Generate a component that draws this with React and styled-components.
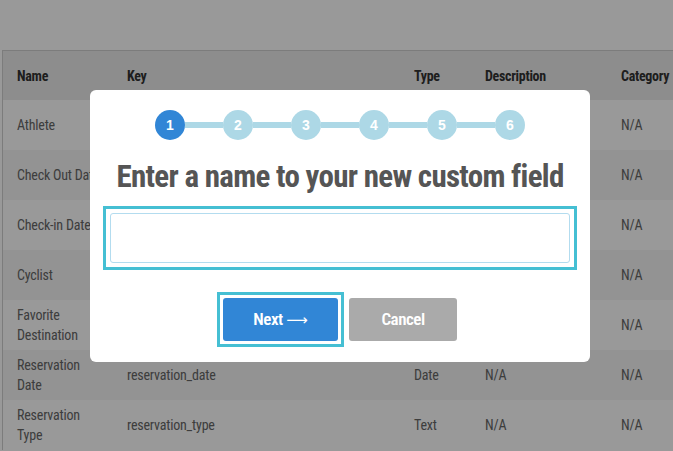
import React from 'react';
import styled, { createGlobalStyle } from 'styled-components';

const FONT = `"Roboto Condensed", Roboto, "Liberation Sans", sans-serif`;

const GlobalStyle = createGlobalStyle`
  html, body {
    margin: 0;
    padding: 0;
    background: #ffffff;
    overflow: hidden;
  }
  body {
    font-family: ${FONT};
  }
`;

const rows = [
  { name: 'Athlete', key: '', type: '', description: '', category: 'N/A' },
  { name: 'Check Out Date', key: '', type: '', description: '', category: 'N/A' },
  { name: 'Check-in Date', key: '', type: '', description: '', category: 'N/A' },
  { name: 'Cyclist', key: '', type: '', description: '', category: 'N/A' },
  { name: 'Favorite Destination', key: '', type: '', description: '', category: 'N/A' },
  { name: 'Reservation Date', key: 'reservation_date', type: 'Date', description: 'N/A', category: 'N/A' },
  { name: 'Reservation Type', key: 'reservation_type', type: 'Text', description: 'N/A', category: 'N/A' },
];

const steps = [1, 2, 3, 4, 5, 6];

export default function App() {
  return (
    <>
      <GlobalStyle />
      <Page>
        <Table>
          <HeaderRow>
            <HeadCell>Name</HeadCell>
            <HeadCell>Key</HeadCell>
            <HeadCell>Type</HeadCell>
            <HeadCell>Description</HeadCell>
            <HeadCell>Category</HeadCell>
          </HeaderRow>
          {rows.map((row, i) => (
            <Row key={row.name} striped={i % 2 === 1}>
              <Cell narrow>{row.name}</Cell>
              <Cell>{row.key}</Cell>
              <Cell>{row.type}</Cell>
              <Cell>{row.description}</Cell>
              <Cell>{row.category}</Cell>
            </Row>
          ))}
        </Table>
      </Page>

      <Overlay>
        <Modal>
          <Stepper>
            {steps.map((n, i) => (
              <React.Fragment key={n}>
                {i > 0 && <Connector />}
                <StepDot active={n === 1}>{n}</StepDot>
              </React.Fragment>
            ))}
          </Stepper>
          <Title>Enter a name to your new custom field</Title>
          <FocusRing offset={4} stretch>
            <NameInput type="text" />
          </FocusRing>
          <Actions>
            <FocusRing offset={3}>
              <NextButton>
                Next <Arrow>&#x27F6;</Arrow>
              </NextButton>
            </FocusRing>
            <CancelButton>Cancel</CancelButton>
          </Actions>
        </Modal>
      </Overlay>
    </>
  );
}

const Page = styled.div`
  padding: 50px 0 0 2px;
  width: 800px;
`;

const Table = styled.div`
  border-top: 1px solid #cfcfcf;
  border-left: 1px solid #cfcfcf;
`;

const columns = `110px 287px 71px 136px 1fr`;

const HeaderRow = styled.div`
  display: grid;
  grid-template-columns: ${columns};
  height: 49px;
  align-items: center;
  background: #ececec;
`;

const HeadCell = styled.div`
  padding-left: 14px;
  font-size: 14px;
  font-weight: 700;
  letter-spacing: -0.3px;
  color: #333333;
`;

const Row = styled.div`
  display: grid;
  grid-template-columns: ${columns};
  height: 50px;
  align-items: center;
  background: ${p => (p.striped ? '#f5f5f5' : '#ffffff')};
`;

const Cell = styled.div`
  padding-left: 14px;
  padding-right: ${p => (p.narrow ? '12px' : '0')};
  font-size: 14px;
  line-height: 20px;
  letter-spacing: -0.2px;
  color: #666666;
`;

const Overlay = styled.div`
  position: fixed;
  inset: 0;
  background: rgba(0, 0, 0, 0.4);
  display: flex;
  align-items: center;
  justify-content: center;
  padding-left: 7px;
`;

const Modal = styled.div`
  width: 500px;
  box-sizing: border-box;
  background: #ffffff;
  border-radius: 6px;
  padding: 20px 20px 21px;
  display: flex;
  flex-direction: column;
  align-items: center;
`;

const Stepper = styled.div`
  display: flex;
  align-items: center;
`;

const Connector = styled.div`
  width: 38px;
  height: 6px;
  background: #add8e6;
`;

const StepDot = styled.div`
  width: 30px;
  height: 30px;
  border-radius: 50%;
  background: ${p => (p.active ? '#3186d6' : '#add8e6')};
  color: #ffffff;
  font-family: "Liberation Sans", Arial, sans-serif;
  font-size: 14px;
  font-weight: 700;
  display: flex;
  align-items: center;
  justify-content: center;
`;

const Title = styled.h2`
  margin: 19px 0 18px;
  font-size: 31px;
  line-height: 36px;
  font-weight: 700;
  letter-spacing: -0.7px;
  white-space: nowrap;
  color: #555555;
  text-align: center;
`;

const FocusRing = styled.div`
  display: flex;
  align-self: ${p => (p.stretch ? 'stretch' : 'auto')};
  margin: ${p => `-${p.offset + 3}px`};
  padding: ${p => `${p.offset}px`};
  border: 3px solid #45bfd3;
`;

const NameInput = styled.input`
  flex: 1;
  height: 50px;
  box-sizing: border-box;
  border: 1px solid #b3dcef;
  border-radius: 3px;
  outline: none;
  font-family: ${FONT};
  font-size: 16px;
  padding: 0 10px;
`;

const Actions = styled.div`
  display: flex;
  align-items: center;
  gap: 11px;
  margin-top: 35px;
`;

const Button = styled.button`
  height: 43px;
  border: none;
  border-radius: 3px;
  color: #ffffff;
  font-family: ${FONT};
  font-size: 17px;
  font-weight: 600;
  letter-spacing: -0.5px;
  cursor: pointer;
`;

const Arrow = styled.span`
  font-family: "DejaVu Sans", sans-serif;
  font-weight: 400;
  font-size: 15px;
  letter-spacing: 0;
`;

const NextButton = styled(Button)`
  width: 115px;
  background: #3186d6;
`;

const CancelButton = styled(Button)`
  width: 108px;
  background: #aaaaaa;
`;
